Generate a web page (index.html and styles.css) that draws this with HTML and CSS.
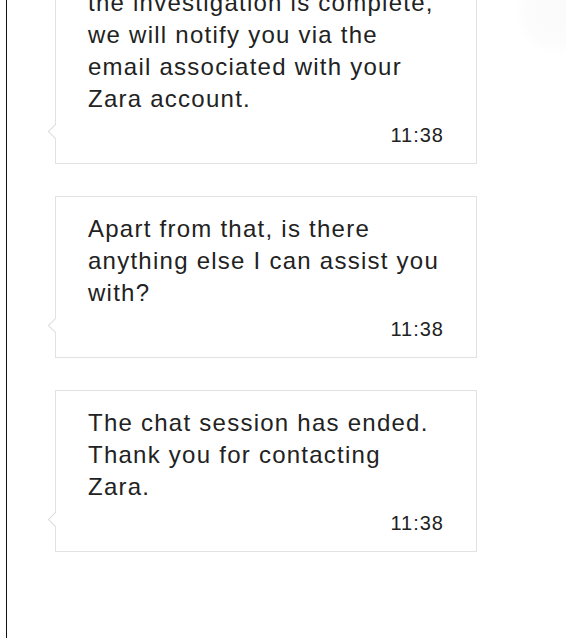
FILE: index.html
```html
<!DOCTYPE html>
<html lang="en">
<head>
<meta charset="utf-8">
<title>Chat</title>
<link rel="stylesheet" href="styles.css">
</head>
<body>
<div class="frame">
  <div class="rail"></div>
  <main class="chat">
    <div class="list">
      <div class="bubble">
        <p class="msg">Your request has been sent to<br>our team for review. Once<br>the investigation is complete,<br>we will notify you via the<br>email associated with your<br>Zara account.</p>
        <div class="time">11:38</div>
      </div>
      <div class="bubble">
        <p class="msg">Apart from that, is there<br>anything else I can assist you<br>with?</p>
        <div class="time">11:38</div>
      </div>
      <div class="bubble">
        <p class="msg">The chat session has ended.<br>Thank you for contacting<br>Zara.</p>
        <div class="time">11:38</div>
      </div>
    </div>
  </main>
  <div class="glow"></div>
</div>
</body>
</html>
```

FILE: styles.css
```css
html, body {
  margin: 0;
  padding: 0;
  background: #ffffff;
}
body {
  width: 566px;
  height: 638px;
  overflow: hidden;
  font-family: "Liberation Sans", Arial, sans-serif;
  color: #222222;
}
.frame {
  position: relative;
  display: flex;
  height: 638px;
  overflow: hidden;
}
.rail {
  width: 6px;
  border-right: 1px solid #111111;
  flex: none;
}
.chat {
  flex: 1;
  padding-left: 48px;
  overflow: hidden;
}
.list {
  width: 422px;
  margin-top: -94px;
  display: flex;
  flex-direction: column;
  gap: 32px;
}
.bubble {
  position: relative;
  border: 1px solid #e2e2e2;
  background: #ffffff;
  padding: 16px 33px 16px 32px;
}
.bubble::before {
  content: "";
  position: absolute;
  left: -6px;
  bottom: 26px;
  width: 10px;
  height: 10px;
  background: #ffffff;
  border-left: 1px solid #dcdcdc;
  border-bottom: 1px solid #dcdcdc;
  transform: rotate(45deg);
}
.msg {
  margin: 0;
  font-size: 24px;
  line-height: 32px;
  letter-spacing: 1.25px;
  white-space: nowrap;
}
.time {
  margin-top: 8px;
  font-size: 20px;
  line-height: 24px;
  letter-spacing: 1px;
  text-align: right;
  margin-right: -1px;
}
.glow {
  position: absolute;
  right: -34px;
  top: -30px;
  width: 84px;
  height: 84px;
  border-radius: 50%;
  background: radial-gradient(circle, #fafafa 0%, #fcfcfc 55%, rgba(255,255,255,0) 72%);
}
```
